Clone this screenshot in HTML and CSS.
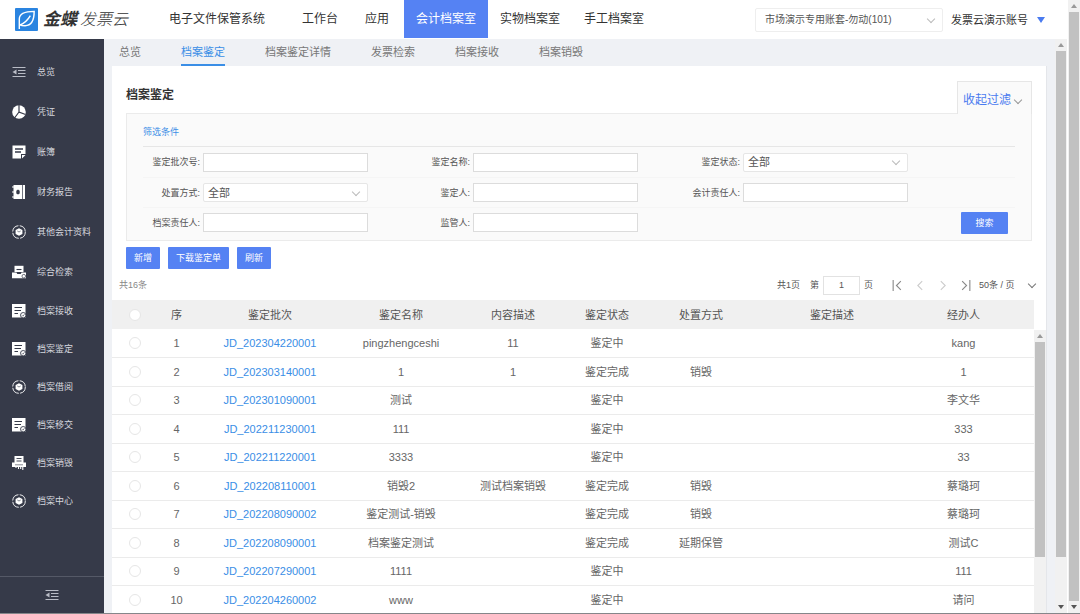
FILE: index.html
```html
<!DOCTYPE html>
<html lang="zh-CN">

<head>
    <meta charset="UTF-8">
    <meta name="viewport" content="width=device-width, initial-scale=1.0">
    <title>档案鉴定</title>
    <link rel="stylesheet" href="styles.css">
</head>

<body>
    <!-- 图标 -->
    <svg class="sprite" aria-hidden="true">
        <symbol id="i-menu" viewBox="0 0 14 14">
            <path d="M.5 2.500h13M6 5.500h7.500M6 8.500h7.500M.5 11.500h13" stroke="currentColor" fill="none" />
            <path d="M.5 7L4.500 4.500v5z" fill="currentColor" />
        </symbol>
        <symbol id="i-pie" viewBox="0 0 14 14">
            <circle cx="7" cy="7" r="6.800" fill="currentColor" />
            <path d="M7 0v7l6.500 2.500M7 7l-4.500 6" stroke="#363a49" stroke-width="1.200" fill="none" />
        </symbol>
        <symbol id="i-note" viewBox="0 0 14 14">
            <path d="M.5.5h13v8.500h-4.500v4.500H.5z" fill="currentColor" />
            <path d="M3 4h8M3 7h6" stroke="#363a49" stroke-width="1.300" fill="none" />
            <path d="M10 13.500V10h3.500z" fill="currentColor" />
        </symbol>
        <symbol id="i-book" viewBox="0 0 14 14">
            <path d="M1.500 0h8.500v14H1.500v-1.500H0v-1h1.500v-4H0v-1h1.500v-4H0v-1h1.500zM10.700 0H13v14h-2.300z" fill="currentColor" />
            <path d="M6 4.600l1.700 1.200v2.600L6 9.600 4.300 8.400V5.800z" fill="#363a49" />
        </symbol>
        <symbol id="i-ring" viewBox="0 0 14 14">
            <circle cx="7" cy="7" r="6.300" fill="none" stroke="currentColor" stroke-width=".9" stroke-dasharray="8.500 1.400" />
            <path d="M7 3.200l3.400 1.900v3.800L7 10.800 3.600 8.900V5.100z" fill="currentColor" />
            <path d="M5.300 6L7 7l1.700-1" stroke="#363a49" stroke-width=".6" fill="none" />
        </symbol>
        <symbol id="i-tray" viewBox="0 0 14 14">
            <path d="M2.500.8h9V7h-9z" fill="currentColor" />
            <path d="M0 7.500h4.500l.8 1.500h3.400l.8-1.500H14v5.700H0z" fill="currentColor" />
            <path d="M4.500 4.500h5" stroke="#363a49" stroke-width="1.100" />
            <circle cx="11.800" cy="11.200" r="1.800" fill="currentColor" stroke="#363a49" stroke-width=".7" />
        </symbol>
        <symbol id="i-check" viewBox="0 0 14 14">
            <path d="M0 0h13.500v13.500H0z" fill="currentColor" />
            <path d="M2.500 3.500H10M2.500 6.500h6.500M2.500 9.500H6" stroke="#363a49" stroke-width="1.200" />
            <circle cx="11.200" cy="11.200" r="2.700" fill="currentColor" stroke="#363a49" stroke-width=".9" />
            <path d="M10 11.300l.9.900 1.500-1.900" stroke="#363a49" stroke-width=".7" fill="none" />
        </symbol>
        <symbol id="i-shred" viewBox="0 0 14 14">
            <path d="M2.500 0h9v6.500H14V11H0V6.500h2.500z" fill="currentColor" />
            <path d="M4.500 2.500h5M4.500 5h5" stroke="#363a49" stroke-width=".9" />
            <path d="M3 8.800h8" stroke="#363a49" stroke-width=".6" />
            <path d="M4 10.500v1.500M6.500 10.500V13M8.700 10.500V13M10.800 10.500V14" stroke="currentColor" stroke-width="1.100" />
        </symbol>
        <symbol id="i-prev" viewBox="0 0 10 10">
            <path d="M7 1L3 5l4 4" stroke="currentColor" fill="none" />
        </symbol>
        <symbol id="i-next" viewBox="0 0 10 10">
            <path d="M3 1l4 4-4 4" stroke="currentColor" fill="none" />
        </symbol>
        <symbol id="i-first" viewBox="0 0 10 10">
            <path d="M1.500 0v10M8.500 1l-4 4 4 4" stroke="currentColor" fill="none" />
        </symbol>
        <symbol id="i-last" viewBox="0 0 10 10">
            <path d="M8.500 0v10M1.500 1l4 4-4 4" stroke="currentColor" fill="none" />
        </symbol>
    </svg>

    <div class="app">
        <header class="header">
            <a class="logo" href="#">
                <svg class="logo-mark" viewBox="0 0 24 24" aria-hidden="true">
                    <rect width="24" height="24" rx="1" fill="#2a84e0" />
                    <path d="M4.500 22V11.500C4.500 6 9 3.500 20 3.500c0 9-2.500 15-9.500 15-2.500 0-4.500-.5-6-1.500M5 18c4.500-2 8.500-5.500 11-10" fill="none" stroke="#fff" stroke-width="1.500" />
                </svg>
                <b>金蝶</b><span>发票云</span>
            </a>
            <nav class="nav">
                <a class="system" href="#">电子文件保管系统</a>
                <a href="#">工作台</a>
                <a href="#">应用</a>
                <a class="active" href="#">会计档案室</a>
                <a href="#">实物档案室</a>
                <a href="#">手工档案室</a>
            </nav>
            <div class="select account">
                <select aria-label="账套">
                    <option>市场演示专用账套-勿动(101)</option>
                </select>
            </div>
            <button class="user">发票云演示账号</button>
        </header>

        <div class="body">
            <aside class="sidebar">
                <ul>
                    <li><a href="#"><svg><use href="#i-menu" /></svg>总览</a></li>
                    <li><a href="#"><svg><use href="#i-pie" /></svg>凭证</a></li>
                    <li><a href="#"><svg><use href="#i-note" /></svg>账簿</a></li>
                    <li><a href="#"><svg><use href="#i-book" /></svg>财务报告</a></li>
                    <li><a href="#"><svg><use href="#i-ring" /></svg>其他会计资料</a></li>
                    <li><a href="#"><svg><use href="#i-tray" /></svg>综合检索</a></li>
                </ul>
                <ul class="archive">
                    <li><a href="#"><svg><use href="#i-check" /></svg>档案接收</a></li>
                    <li><a href="#"><svg><use href="#i-check" /></svg>档案鉴定</a></li>
                    <li><a href="#"><svg><use href="#i-ring" /></svg>档案借阅</a></li>
                    <li><a href="#"><svg><use href="#i-check" /></svg>档案移交</a></li>
                    <li><a href="#"><svg><use href="#i-shred" /></svg>档案销毁</a></li>
                    <li><a href="#"><svg><use href="#i-ring" /></svg>档案中心</a></li>
                </ul>
                <button class="fold" aria-label="收起菜单"><svg><use href="#i-menu" /></svg></button>
            </aside>

            <main class="main">
                <nav class="tabs">
                    <a href="#">总览</a>
                    <a class="active" href="#">档案鉴定</a>
                    <a href="#">档案鉴定详情</a>
                    <a href="#">发票检索</a>
                    <a href="#">档案接收</a>
                    <a href="#">档案销毁</a>
                </nav>

                <section class="panel">
                    <div class="panel-head">
                        <h1>档案鉴定</h1>
                        <button class="toggle">收起过滤</button>
                    </div>

                    <form class="filter">
                        <h2>筛选条件</h2>
                        <div class="fields">
                            <div class="field"><label for="batch">鉴定批次号:</label><input type="text" id="batch"></div>
                            <div class="field"><label for="name">鉴定名称:</label><input type="text" id="name"></div>
                            <div class="field"><label for="status">鉴定状态:</label>
                                <div class="select"><select id="status"><option>全部</option></select></div>
                            </div>
                        </div>
                        <div class="fields">
                            <div class="field"><label for="way">处置方式:</label>
                                <div class="select"><select id="way"><option>全部</option></select></div>
                            </div>
                            <div class="field"><label for="person">鉴定人:</label><input type="text" id="person"></div>
                            <div class="field"><label for="account">会计责任人:</label><input type="text" id="account"></div>
                        </div>
                        <div class="fields">
                            <div class="field"><label for="keeper">档案责任人:</label><input type="text" id="keeper"></div>
                            <div class="field"><label for="monitor">监管人:</label><input type="text" id="monitor"></div>
                            <button type="button" class="btn search">搜索</button>
                        </div>
                    </form>

                    <div class="actions">
                        <button class="btn">新增</button>
                        <button class="btn">下载鉴定单</button>
                        <button class="btn">刷新</button>
                    </div>

                    <div class="pager">
                        <span class="count">共16条</span>
                        <span>共1页</span>
                        <label class="goto">第<input type="text" value="1">页</label>
                        <div class="steps">
                            <button aria-label="首页"><svg><use href="#i-first" /></svg></button>
                            <button aria-label="上一页" disabled><svg><use href="#i-prev" /></svg></button>
                            <button aria-label="下一页" disabled><svg><use href="#i-next" /></svg></button>
                            <button aria-label="末页"><svg><use href="#i-last" /></svg></button>
                        </div>
                        <div class="select size">
                            <select aria-label="每页条数"><option>50条 / 页</option></select>
                        </div>
                    </div>

                    <div class="grid">
                        <table>
                            <colgroup>
                                <col class="c-radio"><col class="c-no"><col class="c-wide"><col class="c-mid"><col class="c-mid">
                                <col class="c-status"><col class="c-mid"><col class="c-wide"><col class="c-last">
                            </colgroup>
                            <thead>
                                <tr>
                                    <th><input type="radio" name="row" aria-label="全部"></th>
                                    <th>序</th><th>鉴定批次</th><th>鉴定名称</th><th>内容描述</th><th>鉴定状态</th><th>处置方式</th><th>鉴定描述</th><th>经办人</th>
                                </tr>
                            </thead>
                            <tbody>
                                <tr>
                                    <td><input type="radio" name="row" aria-label="1"></td>
                                    <td>1</td><td><a href="#">JD_202304220001</a></td><td>pingzhengceshi</td><td>11</td><td>鉴定中</td><td></td><td></td><td>kang</td>
                                </tr>
                                <tr>
                                    <td><input type="radio" name="row" aria-label="2"></td>
                                    <td>2</td><td><a href="#">JD_202303140001</a></td><td>1</td><td>1</td><td>鉴定完成</td><td>销毁</td><td></td><td>1</td>
                                </tr>
                                <tr>
                                    <td><input type="radio" name="row" aria-label="3"></td>
                                    <td>3</td><td><a href="#">JD_202301090001</a></td><td>测试</td><td></td><td>鉴定中</td><td></td><td></td><td>李文华</td>
                                </tr>
                                <tr>
                                    <td><input type="radio" name="row" aria-label="4"></td>
                                    <td>4</td><td><a href="#">JD_202211230001</a></td><td>111</td><td></td><td>鉴定中</td><td></td><td></td><td>333</td>
                                </tr>
                                <tr>
                                    <td><input type="radio" name="row" aria-label="5"></td>
                                    <td>5</td><td><a href="#">JD_202211220001</a></td><td>3333</td><td></td><td>鉴定中</td><td></td><td></td><td>33</td>
                                </tr>
                                <tr>
                                    <td><input type="radio" name="row" aria-label="6"></td>
                                    <td>6</td><td><a href="#">JD_202208110001</a></td><td>销毁2</td><td>测试档案销毁</td><td>鉴定完成</td><td>销毁</td><td></td><td>蔡璐珂</td>
                                </tr>
                                <tr>
                                    <td><input type="radio" name="row" aria-label="7"></td>
                                    <td>7</td><td><a href="#">JD_202208090002</a></td><td>鉴定测试-销毁</td><td></td><td>鉴定完成</td><td>销毁</td><td></td><td>蔡璐珂</td>
                                </tr>
                                <tr>
                                    <td><input type="radio" name="row" aria-label="8"></td>
                                    <td>8</td><td><a href="#">JD_202208090001</a></td><td>档案鉴定测试</td><td></td><td>鉴定完成</td><td>延期保管</td><td></td><td>测试C</td>
                                </tr>
                                <tr>
                                    <td><input type="radio" name="row" aria-label="9"></td>
                                    <td>9</td><td><a href="#">JD_202207290001</a></td><td>1111</td><td></td><td>鉴定中</td><td></td><td></td><td>111</td>
                                </tr>
                                <tr>
                                    <td><input type="radio" name="row" aria-label="10"></td>
                                    <td>10</td><td><a href="#">JD_202204260002</a></td><td>www</td><td></td><td>鉴定中</td><td></td><td></td><td>请问</td>
                                </tr>
                            </tbody>
                        </table>
                        <div class="scroll scroll-table"><i class="up"></i><div class="track"><div class="thumb"></div></div></div>
                    </div>
                </section>
            </main>

            <div class="scroll scroll-main"><i class="up"></i><div class="track"><div class="thumb"></div></div><i class="down"></i></div>
        </div>
    </div>
    <div class="scroll scroll-page"><i class="up"></i><div class="track"><div class="thumb"></div></div><i class="down"></i></div>
</body>

</html>
```
FILE: styles.css
```css
* {
    margin: 0;
    padding: 0;
    box-sizing: border-box;
}

ul {
    list-style: none;
}

a {
    color: inherit;
    text-decoration: none;
}

body {
    display: flex;
    height: 100vh;
    overflow: hidden;
    border-bottom: 1px solid #85868a;
    background: #fff;
    color: #555;
    font: 9px/14px "Liberation Sans", "Noto Sans CJK SC", sans-serif;
}

button,
input,
select {
    font: inherit;
    color: inherit;
    border: none;
    background: none;
    outline: none;
}

button {
    cursor: pointer;
}

.sprite {
    display: none;
}

.app {
    flex: 1;
    min-width: 0;
    display: flex;
    flex-direction: column;
}

/* 顶部 */
.header {
    flex: none;
    height: 39px;
    display: flex;
    align-items: center;
    padding: 0 22px 0 15px;
    color: #333;
}

.logo {
    display: flex;
    align-items: center;
    width: 142px;
    font-size: 16px;
    line-height: 24px;
    font-style: italic;
    white-space: nowrap;
}

.logo-mark {
    width: 23px;
    height: 23px;
    margin-right: 5px;
}

.logo b {
    margin-right: 3px;
    font-size: 17px;
}

.logo span {
    font-weight: 300;
}

.nav {
    flex: 1;
    align-self: flex-start;
    display: flex;
    font-size: 12px;
    line-height: 38px;
    white-space: nowrap;
}

.nav a {
    min-width: 54px;
    padding: 0 12px;
    text-align: center;
}

.nav .system {
    margin-right: 13px;
}

.nav .active {
    background: #5582f3;
    color: #fff;
}

/* 下拉框 */
.select {
    position: relative;
}

.select select {
    appearance: none;
    width: 100%;
    height: 100%;
    padding: 0 6px;
}

.select::after,
.toggle::after {
    content: "";
    width: 5px;
    height: 5px;
    border: solid #bbb;
    border-width: 0 1px 1px 0;
    transform: rotate(45deg);
}

.select::after {
    position: absolute;
    right: 8px;
    top: calc(50% - 4px);
    pointer-events: none;
}

.account {
    width: 188px;
    height: 24px;
    margin-right: 8px;
    border: 1px solid #eee;
    border-radius: 2px;
    font-size: 10px;
    color: #555;
}

.account select {
    padding-left: 9px;
}

.user {
    display: flex;
    align-items: center;
    gap: 9px;
    font-size: 11px;
    white-space: nowrap;
}

.user::after {
    content: "";
    border: 4px solid transparent;
    border-top: 6px solid #4a7bf0;
    border-bottom: none;
}

.body {
    flex: 1;
    min-height: 0;
    display: flex;
}

/* 侧边栏 */
.sidebar {
    flex: none;
    width: 104px;
    display: flex;
    flex-direction: column;
    padding-top: 13px;
    background: #363a49;
    color: #d5d7de;
}

.sidebar a {
    display: flex;
    align-items: center;
    gap: 11px;
    height: 40px;
    padding-left: 12px;
    white-space: nowrap;
}

.sidebar .archive a {
    height: 38px;
}

.sidebar svg {
    width: 14px;
    height: 14px;
    color: #fff;
}

.fold {
    display: flex;
    align-items: center;
    justify-content: center;
    height: 37px;
    margin-top: auto;
    border-top: 1px solid #555967;
}

.fold svg,
.sidebar ul:first-child li:first-child svg {
    color: #b9bcc6;
}

/* 主区域 */
.main {
    flex: 1;
    min-width: 0;
    display: flex;
    flex-direction: column;
    padding: 0 8px;
    background: #eff1f5;
}

.tabs {
    flex: none;
    display: flex;
    gap: 40px;
    height: 27px;
    padding-left: 7px;
    font-size: 11px;
    line-height: 27px;
    color: #777;
    white-space: nowrap;
}

.tabs .active {
    color: #3a8ee6;
    border-bottom: 2px solid #3a8ee6;
}

.panel {
    flex: 1;
    min-height: 0;
    overflow: hidden;
    background: #fff;
    border-right: 1px solid #e4e6ea;
}

.panel-head {
    display: flex;
    justify-content: space-between;
    align-items: flex-end;
    height: 47px;
    padding: 0 14px;
}

.panel-head h1 {
    align-self: center;
    padding-top: 10px;
    font-size: 12px;
    line-height: 18px;
    color: #333;
}

.toggle {
    position: relative;
    display: flex;
    align-items: center;
    gap: 4px;
    height: 33px;
    margin-bottom: -1px;
    padding: 3px 10px 0 5px;
    border: solid #e6e6e6;
    border-width: 1px 1px 0;
    background: #fafafa;
    color: #4a7bf0;
    font-size: 12px;
    white-space: nowrap;
}

.toggle::after {
    border-color: #999;
}

.filter {
    margin: 0 14px;
    padding: 10px 16px 3px;
    border: 1px solid #ebebeb;
    background: #fafafa;
}

.filter h2 {
    height: 23px;
    font-size: 9px;
    font-weight: normal;
    line-height: 16px;
    color: #3a8ee6;
    border-bottom: 1px solid #e6e6e6;
}

.fields {
    display: grid;
    grid-template-columns: 225fr 270fr 270fr 107fr;
    align-items: center;
    height: 30px;
}

.fields + .fields {
    border-top: 1px solid #f5f5f5;
}

.field {
    display: flex;
    align-items: center;
    justify-content: flex-end;
    gap: 3px;
    white-space: nowrap;
}

.field input,
.field .select {
    width: 165px;
    height: 19px;
    border: 1px solid #dcdcdc;
    background: #fff;
    padding: 0 5px;
}

.field .select {
    padding: 0;
    border-color: #e6e6e6;
    border-radius: 2px;
    font-size: 11px;
}

.field select {
    padding: 0 4px;
}

.btn {
    height: 22px;
    padding: 0 8px;
    border-radius: 1px;
    background: #5582f3;
    color: #fff;
    white-space: nowrap;
}

.search {
    grid-column: 4;
    justify-self: end;
    width: 47px;
    margin-right: 7px;
}

.actions {
    display: flex;
    gap: 8px;
    padding: 6px 14px;
}

/* 分页 */
.pager {
    display: flex;
    align-items: center;
    height: 20px;
    margin-bottom: 5px;
    padding: 0 7px;
    white-space: nowrap;
}

.pager .count {
    margin-right: auto;
    color: #888;
}

.goto {
    display: flex;
    align-items: center;
    gap: 4px;
    margin: 0 17px 0 10px;
}

.goto input {
    width: 37px;
    height: 19px;
    border: 1px solid #e2e2e2;
    text-align: center;
}

.steps {
    display: flex;
    gap: 9px;
    color: #888;
}

.steps button {
    display: flex;
    padding: 1px;
}

.steps button:disabled {
    color: #ccc;
}

.steps svg {
    width: 12px;
    height: 11px;
}

.size {
    width: 60px;
    height: 19px;
    margin-left: 6px;
}

.size select {
    padding: 0;
}

.size::after {
    right: 4px;
    border-color: #777;
}

/* 表格 */
.grid {
    display: flex;
}

table {
    flex: 1;
    width: 100%;
    table-layout: fixed;
    border-collapse: collapse;
    font-size: 11px;
    color: #666;
    text-align: center;
    white-space: nowrap;
}

.c-radio {
    width: 46px;
}

.c-no {
    width: 37px;
}

.c-wide {
    width: 150px;
}

.c-mid {
    width: 112px;
}

.c-status {
    width: 76px;
}

.c-last {
    width: 127px;
}

thead tr,
tbody tr:nth-child(even) {
    height: 29px;
}

tbody tr {
    height: 28px;
    border-bottom: 1px solid #ebebeb;
}

th {
    background: #f0f0f0;
    color: #555;
    font-weight: normal;
}

th:last-child,
td:last-child {
    padding-right: 14px;
}

td a {
    color: #3a8ee6;
}

input[type="radio"] {
    display: block;
    appearance: none;
    width: 12px;
    height: 12px;
    margin: 0 auto;
    border: 1px solid #e6e6e6;
    border-radius: 50%;
    background: #fff;
}

/* 滚动条 */
.scroll {
    flex: none;
    width: 12px;
    display: flex;
    flex-direction: column;
    background: #f1f1f1;
}

.scroll .track {
    flex: 1;
    min-height: 0;
}

.scroll .thumb {
    width: 10px;
    margin: 0 auto;
    background: #c1c1c1;
}

.scroll i {
    flex: none;
    width: 6px;
    margin: 4px auto;
    border: 3px solid transparent;
}

.scroll .up {
    border-top: none;
    border-bottom: 4px solid #999;
}

.scroll .down {
    border-bottom: none;
    border-top: 4px solid #555;
}

.scroll-page {
    width: 13px;
    border-left: 1px solid #fff;
}

.scroll-page .thumb {
    height: 100%;
}

.scroll-main .thumb {
    height: 92%;
}

.scroll-table {
    margin-top: 30px;
}

.scroll-table .thumb {
    height: 79%;
}
```
